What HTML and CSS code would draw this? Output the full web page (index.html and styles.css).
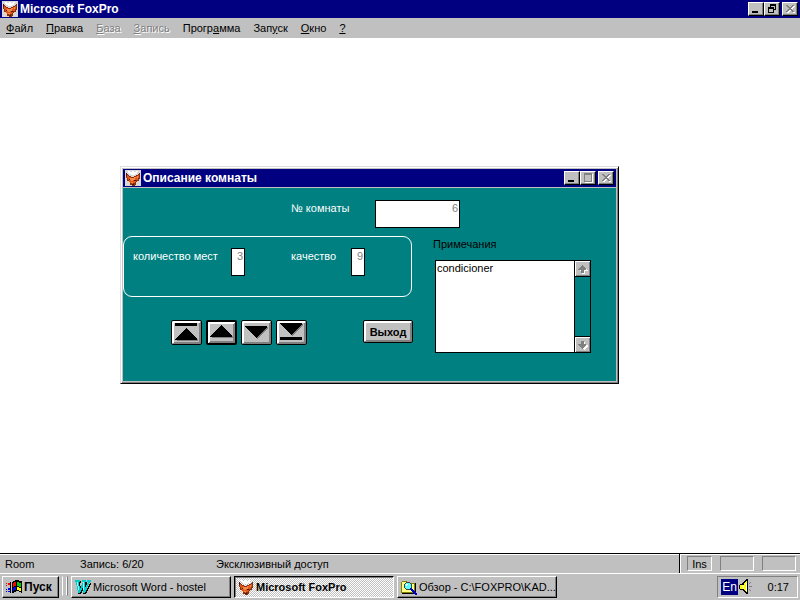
FILE: index.html
```html
<!DOCTYPE html>
<html lang="ru">
<head>
    <meta charset="UTF-8">
    <meta name="viewport" content="width=device-width, initial-scale=1.0">
    <title>Microsoft FoxPro</title>
    <link rel="stylesheet" href="styles.css">
</head>
<body>
    <!-- Shared icons -->
    <svg class="sprites" aria-hidden="true">
        <symbol id="fox" viewBox="0 0 16 16">
            <path fill="#fff" d="M3 1h2v1h2V1h2v1h2V1h2v1h-1v2h-2v1H6V4H4V3H3z"/>
            <path fill="#8a3010" d="M1 3h1v1h1v1h1v1h2v1h3V6h2V5h2V4h1V3h1v6h-1v2h-2v2h-1v2h-1v1H7v-1H5v-2H3v-2H2V8H1z"/>
            <path fill="#e05818" d="M2 5h1v1h1v1h2v1h3V7h2V6h2V5h1v3h-1v2h-2v2h-1v1H8v2H7v-2H5v-1H4v-2H3V8H2z"/>
            <path fill="#f88848" d="M5 8h4V7h2v1h-1v2H8v1H6v-1H5zM12 6h1v2h-1zM6 12h2v1H6z"/>
            <path fill="#501808" d="M1 3h1v3H1zM4 9h1v1H4zM9 10h2v1H9zM7 14h2v1H7z"/>
            <path fill="#f8d0b0" d="M3 11h1v1h1v1H4v1H3zM12 11h1v1h-1v1h-1v-1h1z"/>
        </symbol>
        <symbol id="min" viewBox="0 0 12 10">
            <path d="M2 7h6v2H2z"/>
        </symbol>
        <symbol id="close" viewBox="0 0 12 10">
            <path fill="#fff" d="M3 2h2v1h1v1h2V3h1V2h2v1h-1v1H9v1H8v1h1v1h1v1h1v1H9V8H8V7H6v1H5v1H3V8h1V7h1V6h1V5H5V4H4V3H3z"/>
            <path fill="#808080" d="M2 1h2v1h1v1h2V2h1V1h2v1H9v1H8v1H7v1h1v1h1v1h1v1H8V7H7V6H5v1H4v1H2V7h1V6h1V5h1V4H4V3H3V2H2z"/>
        </symbol>
    </svg>

    <header class="title-bar">
        <svg class="icon icon-fox"><use href="#fox"/></svg>
        <h1>Microsoft FoxPro</h1>
        <div class="window-buttons">
            <button type="button" aria-label="Свернуть"><svg><use href="#min"/></svg></button>
            <button type="button" aria-label="Восстановить">
                <svg viewBox="0 0 12 10"><path d="M4 0h6v6H8V5h1V2H5v1H4zM2 3h6v6H2zM3 5v3h4V5z" fill-rule="evenodd"/></svg>
            </button>
            <button type="button" class="close" aria-label="Закрыть"><svg><use href="#close"/></svg></button>
        </div>
    </header>

    <nav class="menu-bar">
        <a href="#"><u>Ф</u>айл</a>
        <a href="#"><u>П</u>равка</a>
        <a href="#" class="disabled" aria-disabled="true"><u>Б</u>аза</a>
        <a href="#" class="disabled" aria-disabled="true"><u>З</u>апись</a>
        <a href="#">Прогр<u>а</u>мма</a>
        <a href="#">Зап<u>у</u>ск</a>
        <a href="#"><u>О</u>кно</a>
        <a href="#"><u>?</u></a>
    </nav>

    <main class="workspace">
        <section class="window">
            <div class="title-bar">
                <svg class="icon icon-fox"><use href="#fox"/></svg>
                <h2>Описание комнаты</h2>
                <div class="window-buttons">
                    <button type="button" aria-label="Свернуть"><svg><use href="#min"/></svg></button>
                    <button type="button" aria-label="Развернуть" disabled>
                        <svg viewBox="0 0 12 10"><path fill="#fff" d="M3 1h8v9H3z"/><path fill="#808080" d="M2 0h8v9H2z"/><path fill="#c0c0c0" d="M3 2h6v6H3z"/></svg>
                    </button>
                    <button type="button" class="close" aria-label="Закрыть" disabled><svg><use href="#close"/></svg></button>
                </div>
            </div>

            <form class="room-form">
                <div class="room-number">
                    <label for="room">№ комнаты</label>
                    <input id="room" type="text" value="6">
                </div>

                <div class="columns">
                    <div class="left">
                        <div class="group">
                            <label for="places">количество мест</label>
                            <input id="places" type="text" value="3">
                            <label for="quality">качество</label>
                            <input id="quality" type="text" value="9">
                        </div>
                        <div class="actions">
                            <button type="button" class="nav-button" aria-label="Первая">
                                <svg viewBox="0 0 25 19"><path fill="#808080" d="M13 6l11 11v1H3z"/><path d="M1 0h22v3H1zM12 5l11 11v1H1v-1z"/></svg>
                            </button>
                            <button type="button" class="nav-button current" aria-label="Предыдущая">
                                <svg viewBox="0 0 25 19"><path fill="#808080" d="M13 3l11 10v2H3z"/><path d="M12 2l11 11v1H1v-1z"/></svg>
                            </button>
                            <button type="button" class="nav-button" aria-label="Следующая">
                                <svg viewBox="0 0 25 19"><path fill="#808080" d="M3 4h21v1L13 16z"/><path d="M1 3h22v1L12 15 1 4z"/></svg>
                            </button>
                            <button type="button" class="nav-button" aria-label="Последняя">
                                <svg viewBox="0 0 25 19"><path fill="#808080" d="M3 1h21v1L13 13z"/><path d="M1 0h22v1L12 12 1 1zM1 14h22v3H1z"/></svg>
                            </button>
                            <button type="button" class="exit">Выход</button>
                        </div>
                    </div>

                    <div class="notes">
                        <label for="notes">Примечания</label>
                        <div class="memo">
                            <textarea id="notes">condicioner</textarea>
                            <div class="scroll">
                                <button type="button" aria-label="Вверх">
                                    <svg viewBox="0 0 13 13"><path fill="#fff" d="M7 4l5 5H9v3H6V9H4z"/><path fill="#808080" d="M6 3l4 4v1H8v3H5V8H2V7z"/></svg>
                                </button>
                                <button type="button" aria-label="Вниз">
                                    <svg viewBox="0 0 13 13"><path fill="#fff" d="M6 4h3v3h3v1l-4 4-4-4z"/><path fill="#808080" d="M5 3h3v3h2v1l-4 4-4-4V6h3z"/></svg>
                                </button>
                            </div>
                        </div>
                    </div>
                </div>
            </form>
        </section>
    </main>

    <div class="status-bar">
        <span class="table-name">Room</span>
        <span class="record">Запись: 6/20</span>
        <span class="access">Эксклюзивный доступ</span>
        <div class="indicators">
            <span class="ins">Ins</span>
            <span></span>
            <span></span>
        </div>
    </div>

    <footer class="taskbar">
        <button type="button" class="start">
            <svg class="icon" viewBox="0 0 16 16">
                <path d="M6 3h1V2h2V1h4v1h3v12h-1v-1h-2v-1h-3v1H8v1H6zM4 3h1v11H4z"/>
                <path fill="#f00" d="M7 4h1V3h2v4H8v1H7zM0 4h1v1H0zM2 4h2v2H2zM0 6h1v1H0z"/>
                <path fill="#0c0" d="M11 3h2v1h2v4h-2V7h-2z"/>
                <path fill="#00f" d="M7 9h1V8h2v3H8v1H7zM0 10h1v1H0zM2 9h2v2H2zM0 12h1v1H0zM2 12h2v1H2z"/>
                <path fill="#ff0" d="M11 8h2v1h2v3h-2v-1h-2z"/>
            </svg>
            Пуск
        </button>
        <div class="grip"></div>
        <button type="button" class="task">
            <svg class="icon" viewBox="0 0 16 16">
                <path d="M1 2h5v2H5l1 6 2-5V3h4v7l3-6h1v1l-5 10H8v-4l-2 4H3L2 4H1z"/>
                <path fill="#0cc" d="M0 1h5v2H4l1 7 3-7H7V1h4v2h-1v6l3-6h-1V1h4v2h-1l-5 11H8V8l-3 6H3L1 3H0z"/>
                <path fill="#8ff" d="M2 3h1l1 8H3zM8 3h1v8H8z"/>
            </svg>
            <span>Microsoft Word - hostel</span>
        </button>
        <button type="button" class="task active">
            <svg class="icon"><use href="#fox"/></svg>
            <span>Microsoft FoxPro</span>
        </button>
        <button type="button" class="task">
            <svg class="icon" viewBox="0 0 16 16">
                <path fill="#808000" d="M0 3h1V2h5v1h1v1h7v10H0z"/>
                <path fill="#ffff80" d="M1 3h5v1h1v1h6v8H1z"/>
                <path d="M1 14h13V4h1v11H1z"/>
                <path fill="#404040" d="M5 3h4v1h1v1h1v4h-1v1H9v1H5v-1H4V9H3V5h1V4h1z"/>
                <path fill="#5ff" d="M5 4h4v1h1v4H9v1H5V9H4V5h1z"/>
                <path fill="#fff" d="M5 5h2v1H6v1H5z"/>
                <path fill="#00c" d="M9 9h2v1h1v1h1v1h1v1h1v1h1v2h-2v-1h-1v-1h-1v-1h-1v-1h-1v-1H9z"/>
            </svg>
            <span>Обзор - C:\FOXPRO\KAD...</span>
        </button>
        <div class="tray">
            <span class="lang">En</span>
            <svg class="icon" viewBox="0 0 16 16">
                <path d="M1 6h1V5h2V4h1V3h1V2h1V1h1V0h2v15H8v-1H7v-1H6v-1H5v-1H2v-1H1z"/>
                <path fill="#ff0" d="M2 6h3v4H2zM6 4h1V3h1V2h1v11H8v-1H7v-1H6z"/>
                <path fill="#fff" d="M5 6h1v4H5zM8 4h1v8H8z"/>
                <path fill="#808080" d="M11 4h1V3h1v1h-1v1h-1zM11 7h3v1h-3zM11 10h1v1h1v1h-1v-1h-1z"/>
            </svg>
            <time>0:17</time>
        </div>
    </footer>
</body>
</html>
```
FILE: styles.css
```css
* {
    box-sizing: border-box;
}

body {
    display: flex;
    flex-direction: column;
    min-height: 100vh;
    margin: 0;
    background-color: #fff;
    color: #000;
    font-family: "Liberation Sans", Arial, sans-serif;
    font-size: 11px;
    line-height: 14px;
}

button,
input,
textarea {
    margin: 0;
    padding: 0;
    border-radius: 0;
    font: inherit;
    color: inherit;
}

svg {
    display: block;
    shape-rendering: crispEdges;
}

.sprites {
    position: absolute;
    width: 0;
    height: 0;
}

.icon {
    flex: none;
    width: 16px;
    height: 16px;
}

.icon-fox {
    background-color: #d8d8d8;
}

/* Title bars */
.title-bar {
    display: flex;
    align-items: center;
    height: 18px;
    padding: 0 2px;
    background-color: #000080;
    color: #fff;
}

.title-bar h1,
.title-bar h2 {
    flex: 1;
    margin: 0 0 0 2px;
    font-size: 12px;
    line-height: 16px;
}

.window-buttons {
    display: flex;
}

.window-buttons button {
    width: 16px;
    height: 14px;
    padding: 1px;
    background-color: #c0c0c0;
    border: 1px solid;
    border-color: #fff #000 #000 #fff;
    box-shadow: inset -1px -1px #808080;
}

.window-buttons .close {
    margin-left: 2px;
}

.window-buttons svg {
    width: 12px;
    height: 10px;
}

/* Menu */
.menu-bar {
    display: flex;
    gap: 13px;
    height: 20px;
    padding: 3px 6px;
    background-color: #c0c0c0;
}

.menu-bar a {
    color: #000;
    text-decoration: none;
}

.menu-bar .disabled {
    color: #808080;
    text-shadow: 1px 1px #fff;
}

/* Workspace and room window */
.workspace {
    position: relative;
    flex: 1;
    min-height: 360px;
}

.window {
    position: absolute;
    top: 128px;
    left: 120px;
    width: 499px;
    padding: 2px;
    background-color: #c0c0c0;
    border: 1px solid;
    border-color: #dfdfdf #000 #000 #dfdfdf;
    box-shadow: inset 1px 1px #fff, inset -1px -1px #808080;
}

.window .title-bar {
    margin-bottom: 1px;
}

.room-form {
    padding: 12px 0 28px;
    background-color: #008080;
    color: #fff;
}

.room-form input {
    height: 28px;
    padding: 0 1px 12px;
    background-color: #fff;
    border: 1px solid #000;
    color: #808080;
    text-align: right;
}

.room-number {
    display: flex;
    margin-bottom: 8px;
    padding-left: 168px;
}

.room-number label {
    width: 84px;
    padding-top: 1px;
}

.room-number input {
    width: 85px;
}

.columns {
    display: flex;
    gap: 20px;
}

.left {
    width: 290px;
}

.group {
    display: grid;
    grid-template-columns: 98px 60px 60px 14px;
    height: 61px;
    margin-right: 1px;
    padding: 11px 9px;
    border: 1px solid #fff;
    border-radius: 9px;
}

.group label {
    padding-top: 1px;
}

.group input {
    width: 14px;
}

.actions {
    display: flex;
    align-items: flex-start;
    gap: 4px;
    margin-top: 23px;
    padding-left: 48px;
}

.actions button {
    background-color: #c0c0c0;
    border: 1px solid #000;
    border-radius: 2px;
    box-shadow: inset 1px 1px #fff, inset -1px -1px #808080, inset 2px 2px #fff, inset -2px -2px #808080;
    color: #000;
}

.nav-button {
    width: 31px;
    height: 25px;
    padding: 2px;
}

.actions .current {
    padding: 1px;
    border-width: 2px;
}

.nav-button svg {
    width: 25px;
    height: 19px;
}

.exit {
    width: 50px;
    height: 23px;
    margin-left: auto;
    font-weight: bold;
}

.notes label {
    display: block;
    margin-bottom: 8px;
    color: #000;
    line-height: 16px;
}

.memo {
    display: flex;
    width: 156px;
    height: 93px;
    margin-left: 2px;
    border: 1px solid #000;
}

.memo textarea {
    flex: 1;
    min-width: 0;
    padding: 0 1px;
    background-color: #fff;
    border: 0;
    color: #000;
    resize: none;
    overflow: hidden;
}

.scroll {
    display: flex;
    flex-direction: column;
    justify-content: space-between;
    width: 16px;
    border-left: 1px solid #000;
}

.scroll button {
    height: 16px;
    padding: 1px;
    background-color: #c0c0c0;
    border: 0;
    border-bottom: 1px solid #000;
    box-shadow: inset 1px 1px #fff, inset -1px -1px #808080;
}

.scroll button:last-child {
    border-top: 1px solid #000;
    border-bottom: 0;
}

.scroll svg {
    width: 13px;
    height: 13px;
}

/* Status bar */
.status-bar {
    display: flex;
    height: 20px;
    padding-left: 5px;
    background-color: #c0c0c0;
    border-top: 1px solid #000;
    box-shadow: inset 0 1px #fff;
    line-height: 20px;
}

.table-name {
    width: 75px;
}

.record {
    width: 136px;
}

.access {
    flex: 1;
}

.indicators {
    display: flex;
    gap: 8px;
    padding: 2px 4px 2px 7px;
    border-left: 1px solid #000;
    box-shadow: inset 1px 1px #fff;
}

.indicators span {
    width: 34px;
    height: 15px;
    border: 1px solid;
    border-color: #808080 #fff #fff #808080;
    line-height: 14px;
    text-align: center;
}

.indicators .ins {
    width: 25px;
}

/* Taskbar */
.taskbar {
    display: flex;
    gap: 3px;
    height: 27px;
    padding: 2px;
    background-color: #c0c0c0;
    border-top: 1px solid #fff;
}

.taskbar button {
    display: flex;
    align-items: center;
    gap: 2px;
    height: 22px;
    padding: 0 3px;
    background-color: #c0c0c0;
    border: 1px solid;
    border-color: #fff #000 #000 #fff;
    box-shadow: inset -1px -1px #808080;
    white-space: nowrap;
}

.taskbar .start {
    width: 57px;
    font-size: 12px;
    font-weight: bold;
}

.grip {
    width: 6px;
    height: 20px;
    border: 1px solid;
    border-color: #c0c0c0 #808080 #c0c0c0 #fff;
    box-shadow: inset -1px 0 #fff;
}

.taskbar .task {
    flex: 0 1 160px;
    min-width: 0;
    overflow: hidden;
}

.taskbar .active {
    background: repeating-conic-gradient(#c0c0c0 0 25%, #fff 0 50%) 0 0 / 2px 2px;
    border-color: #000 #fff #fff #000;
    box-shadow: inset 1px 1px #808080;
    font-weight: bold;
}

.tray {
    display: flex;
    align-items: center;
    width: 81px;
    height: 22px;
    margin-left: auto;
    padding: 0 8px 0 3px;
    border: 1px solid;
    border-color: #808080 #fff #fff #808080;
}

.lang {
    width: 17px;
    height: 16px;
    background-color: #000080;
    color: #fff;
    font-size: 12px;
    line-height: 16px;
    text-align: center;
}

.tray time {
    margin-left: auto;
}
```
